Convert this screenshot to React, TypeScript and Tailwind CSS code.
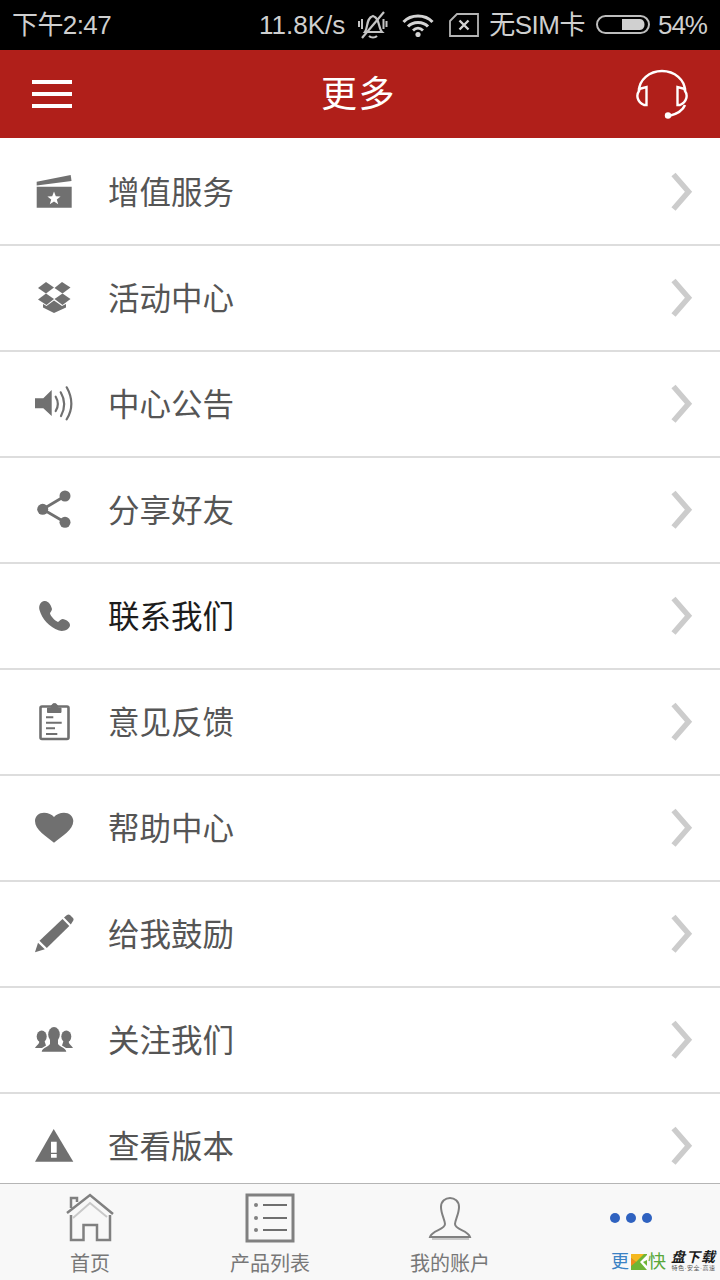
import React from "react";

const G = "#707070";

const ClapIcon = () => (
  <svg viewBox="0 0 40 40" className="w-10 h-10 shrink-0" fill={G}>
    <path d="M2.7 14.7H37.7V35.7H2.7Z" />
    <path d="M2.7 9.7L36.7 3L37.5 9L2.7 13.5Z" />
    <path d="M20 19.5L21.8 24.2L26.6 24.4L22.8 27.4L24.2 32.2L20 29.4L15.8 32.2L17.2 27.4L13.4 24.4L18.2 24.2Z" fill="#ffffff" />
  </svg>
);
const BoxIcon = () => (
  <svg viewBox="0 0 40 40" className="w-10 h-10 shrink-0" fill={G}>
    <path d="M12 4L20 9.5L12 15.5L4 10Z" />
    <path d="M28 4L36.5 9.5L28.5 15.5L20.5 10Z" />
    <path d="M12 15.5L20 21L12.500 27L4 21.500Z" />
    <path d="M28.500 15.500L36.500 21L28.500 27L20.500 21Z" />
    <path d="M20 22.500L28 28L32 26V29.500L20 35L9 29.500V26L12.500 28Z" />
  </svg>
);
const SpeakerIcon = () => (
  <svg viewBox="0 0 40 40" className="w-10 h-10 shrink-0" fill={G}>
    <path d="M1 14.300H9.300L17.700 6V32L9.300 24.300H1Z" />
    <g fill="none" stroke={G} strokeWidth="2.200" strokeLinecap="round">
      <path d="M21.700 12.700Q26 20 21.700 27" />
      <path d="M26.700 8.300Q33.500 20 27 32" />
      <path d="M32.700 3.300Q42 20 32.700 35.300" />
    </g>
  </svg>
);
const ShareIcon = () => (
  <svg viewBox="0 0 40 40" className="w-10 h-10 shrink-0" fill={G}>
    <path d="M31 6L8.700 19.300L31 32.300" fill="none" stroke={G} strokeWidth="2.800" />
    <circle cx="31" cy="6" r="5.500" />
    <circle cx="8.700" cy="19.300" r="5.500" />
    <circle cx="31" cy="32.300" r="5.500" />
  </svg>
);
const PhoneIcon = () => (
  <svg viewBox="0 0 40 40" className="w-10 h-10 shrink-0" fill={G}>
    <path d="M10 5C6 6 4.500 10 5.500 14C8 23 15 31 25 34.500C30 36 36 33 36 29C36 26 32 23.500 28.500 23C26.500 23 25.500 25.500 24 26C20.500 24.500 17 20.500 16 17.500C16 16 18 15 18 13C17.500 10 14.500 4 10 5Z" />
  </svg>
);
const ClipIcon = () => (
  <svg viewBox="0 0 40 40" className="w-10 h-10 shrink-0" fill="none" stroke={G}>
    <rect x="6.500" y="4.500" width="28" height="32.500" rx="1.500" strokeWidth="2.600" />
    <path d="M13.500 10.500V6H17C17 0 24 0 24 6H27V10.500Z" fill={G} strokeWidth="1" />
    <path d="M12 15.300H19.300M12 20.700H27.700M12 26.300H21M12 32H23.300" strokeWidth="2" />
  </svg>
);
const HeartIcon = () => (
  <svg viewBox="0 0 40 40" className="w-10 h-10 shrink-0" fill={G}>
    <path d="M20 34.700C12 28 1 22 1 13C1 8 5 4.700 10 4.700C14 4.700 18 6.500 20 9C22 6.500 26 4.700 30 4.700C35 4.700 39.300 8 39.300 13C39.300 22 28 28 20 34.700Z" />
  </svg>
);
const PencilIcon = () => (
  <svg viewBox="0 0 40 40" className="w-10 h-10 shrink-0" fill={G}>
    <path d="M1 38.300L4 28.800L10.800 35.300Z" />
    <path d="M5.500 26.800L28.500 5L35.300 12L12.800 34Z" />
    <path d="M30 3.500L33 1C34 0.300 35 0.300 36 1L39 4C39.800 5 39.800 6 39 7L36.800 10.500Z" />
  </svg>
);
const PeopleIcon = () => (
  <svg viewBox="0 0 40 40" className="w-10 h-10 shrink-0" fill={G}>
    <ellipse cx="7.700" cy="16.500" rx="5" ry="6" />
    <path d="M1 28C2 25.500 5 25 5.500 21H10.500L12 25.500L8 28Z" />
    <ellipse cx="32.300" cy="16.500" rx="5" ry="6" />
    <path d="M39 28C38 25.500 35 25 34.500 21H29.500L28 25.500L32 28Z" />
    <ellipse cx="20" cy="14.500" rx="5.800" ry="7.500" />
    <path d="M7.700 31.700C8.500 27.500 14 27 16 24V19H24V24C26 27 31.500 27.500 32.300 31.700Z" />
  </svg>
);
const WarnIcon = () => (
  <svg viewBox="0 0 40 40" className="w-10 h-10 shrink-0" fill={G}>
    <path d="M19.700 3L39.300 35.700H1Z" />
    <path d="M17 15.700H22.700V26.700H17ZM17 28H22.700V31.700H17Z" fill="#ffffff" />
  </svg>
);

const Chevron = () => (
  <svg viewBox="0 0 24 40" className="w-6 h-10 shrink-0" fill="none" stroke="#cccccc" strokeWidth="5.500">
    <path d="M3.500 2.500L18.500 19.700L3.500 37" />
  </svg>
);

const rows = [
  { label: "增值服务", icon: <ClapIcon /> },
  { label: "活动中心", icon: <BoxIcon /> },
  { label: "中心公告", icon: <SpeakerIcon /> },
  { label: "分享好友", icon: <ShareIcon /> },
  { label: "联系我们", icon: <PhoneIcon />, dark: true },
  { label: "意见反馈", icon: <ClipIcon /> },
  { label: "帮助中心", icon: <HeartIcon /> },
  { label: "给我鼓励", icon: <PencilIcon /> },
  { label: "关注我们", icon: <PeopleIcon /> },
  { label: "查看版本", icon: <WarnIcon /> },
];

const font = { fontFamily: '"Liberation Sans", "Noto Sans CJK SC", sans-serif' };

export default function App() {
  return (
    <div className="w-[720px] h-[1280px] flex flex-col overflow-hidden bg-white" style={font}>
      <div className="h-[50px] shrink-0 bg-black flex items-center pl-3 pr-[13px] text-[26px] text-[#cfcfcf] whitespace-nowrap">
        <span className="tracking-[-0.6px] shrink-0">下午2:47</span>
        <span className="ml-auto shrink-0">11.8K/s</span>
        <svg viewBox="0 0 32 30" className="w-8 h-[30px] ml-[12px] shrink-0" fill="none" stroke="#c4c4c4" strokeWidth="2.200">
          <path d="M8 22C11 18 9 8 16 6C23 8 21 18 25 22Z" />
          <path d="M12 26C14 28 18 28 20 26" />
          <path d="M27 2L5 28" />
          <path d="M2 11V17M29.500 11V17M5 9V19M26.500 9V19" strokeWidth="2" />
        </svg>
        <svg viewBox="0 0 32 24" className="w-8 h-6 ml-[13px] shrink-0">
          <path d="M1.500 9C9 1 23 1 30.500 9" fill="none" stroke="#d4d4d4" strokeWidth="3" />
          <path d="M6 13.500C11 8 21 8 26 13.500" fill="none" stroke="#d4d4d4" strokeWidth="3" />
          <path d="M11 17.500C14 14.500 18 14.500 21 17.500" fill="none" stroke="#d4d4d4" strokeWidth="2.800" />
          <circle cx="16" cy="21.500" r="2.600" fill="#d4d4d4" />
        </svg>
        <svg viewBox="0 0 30 24" className="w-[30px] h-6 ml-[15px] shrink-0" fill="none" stroke="#b5b5b5" strokeWidth="1.800">
          <path d="M1 8L8 1H29V23H1Z" />
          <path d="M10.500 7.500L19.500 16.500M19.500 7.500L10.500 16.500" strokeWidth="2.400" stroke="#d4d4d4" />
        </svg>
        <span className="ml-[10px] tracking-[-0.5px] shrink-0">无SIM卡</span>
        <svg viewBox="0 0 56 20" className="w-14 h-5 ml-[11px] shrink-0">
          <rect x="1" y="1" width="52" height="17" rx="8.500" fill="none" stroke="#bdbdbd" strokeWidth="2" />
          <path d="M26 4H44C50 4 50 15 44 15H26Z" fill="#d0d0d0" />
        </svg>
        <span className="ml-[6px] tracking-[-1px] shrink-0">54%</span>
      </div>

      <div className="h-[88px] shrink-0 bg-[#b01f1a] flex items-center justify-between pl-8 pr-8">
        <div className="w-10 flex flex-col gap-2">
          <div className="h-1 bg-white" />
          <div className="h-1 bg-white" />
          <div className="h-1 bg-white" />
        </div>
        <div className="text-white text-[36px] leading-none pl-[9px] pt-[2px] tracking-[1.5px]">更多</div>
        <svg viewBox="0 0 52 50" className="w-[52px] h-[50px]" fill="none" stroke="#ffffff" strokeWidth="2.500">
          <path d="M3 22A23 20 0 0 1 49 22" />
          <path d="M3 20V22C0 26 1 33 8 36H10.500V18Z" strokeWidth="2.400" />
          <path d="M49 20V22C52 26 51 33 44 36H41.500V18Z" strokeWidth="2.400" />
          <path d="M49 36C47 41 41 45 33 47" />
          <circle cx="32" cy="46.500" r="3.200" fill="#ffffff" stroke="none" />
        </svg>
      </div>

      <div className="flex-1 min-h-0 overflow-hidden pt-[2px] bg-white">
        {rows.map((r) => (
          <div key={r.label} className="h-[106px] border-b-2 border-[#dddddd] flex items-center pl-[34px] pr-[26px] bg-white">
            {r.icon}
            <span className={`ml-[34px] pt-[3px] text-[31.500px] leading-none ${r.dark ? "text-[#1c1c1c]" : "text-[#555555]"}`}>{r.label}</span>
            <span className="ml-auto flex"><Chevron /></span>
          </div>
        ))}
      </div>

      <div className="h-[97px] shrink-0 border-t border-[#b5b5b5] bg-[#f8f8f8] grid grid-cols-4">
        <div className="flex flex-col items-center pt-[8px]">
          <svg viewBox="0 0 52 52" className="w-[52px] h-[52px]" fill="none" stroke="#808080" strokeWidth="2.500">
            <path d="M7 23V48H19.500V33H33V48H46V23" />
            <path d="M3 21L26 3L49 22" />
            <path d="M7 16V6H13V10" />
            <path d="M9 26L26 11L43 25" stroke="#c9c9c9" strokeWidth="2" />
          </svg>
          <span className="text-[20px] leading-none text-[#777777] mt-[10px]">首页</span>
        </div>
        <div className="flex flex-col items-center pt-[8px]">
          <svg viewBox="0 0 52 52" className="w-[52px] h-[52px]" fill="none" stroke="#808080">
            <rect x="3" y="3" width="46" height="46" strokeWidth="3" />
            <path d="M19 13H43M19 26H43M19 38H43" strokeWidth="2" stroke="#6f6f6f" />
            <circle cx="12" cy="13" r="2" fill="#808080" stroke="none" />
            <circle cx="12" cy="26" r="2" fill="#808080" stroke="none" />
            <circle cx="12" cy="38" r="2" fill="#808080" stroke="none" />
          </svg>
          <span className="text-[20px] leading-none text-[#777777] mt-[10px]">产品列表</span>
        </div>
        <div className="flex flex-col items-center pt-[8px]">
          <svg viewBox="0 0 52 52" className="w-[52px] h-[52px]" fill="none" stroke="#808080" strokeWidth="2">
            <path d="M21 32C21 28 17 22 17 15C17 3 35 3 35 15C35 22 31 28 31 32C31 38 44 38 46 45H6C8 38 21 38 21 32Z" />
            <path d="M8 47H45" stroke="#c9c9c9" strokeWidth="2" />
          </svg>
          <span className="text-[20px] leading-none text-[#777777] mt-[10px]">我的账户</span>
        </div>
        <div className="flex flex-col items-center pt-[28px]">
          <div className="flex gap-[6px] h-[12px] items-center ml-[2px]">
            <div className="w-[10px] h-[10px] rounded-full bg-[#2f62c0]" />
            <div className="w-[10px] h-[10px] rounded-full bg-[#2f62c0]" />
            <div className="w-[10px] h-[10px] rounded-full bg-[#2f62c0]" />
          </div>
          <div className="mt-[27px] flex items-center w-[103px] self-end mr-[6px]">
            <span className="text-[18px] leading-none text-[#3b82c4]">更</span>
            <svg viewBox="0 0 16 16" className="w-4 h-4 ml-[2px] shrink-0">
              <rect width="16" height="16" fill="#6fb536" />
              <path d="M0 0H13L5 8L0 4Z" fill="#f5b81f" />
              <path d="M0 4L5 8L0 12Z" fill="#f08a1d" />
              <path d="M9 8L16 1V6L12 8L16 12V16Z" fill="#ffffff" />
            </svg>
            <span className="text-[18px] leading-none text-[#5aa83a] ml-[1px]">快</span>
            <span className="ml-[5px] flex flex-col items-center leading-none shrink-0">
              <span className="text-[14px] leading-[13px] font-bold italic text-[#1a1a1a] tracking-[1px]">盘下载</span>
              <span className="text-[6px] leading-[8px] text-[#555555] tracking-[0.5px]">特色·安全·高速</span>
            </span>
          </div>
        </div>
      </div>
    </div>
  );
}
